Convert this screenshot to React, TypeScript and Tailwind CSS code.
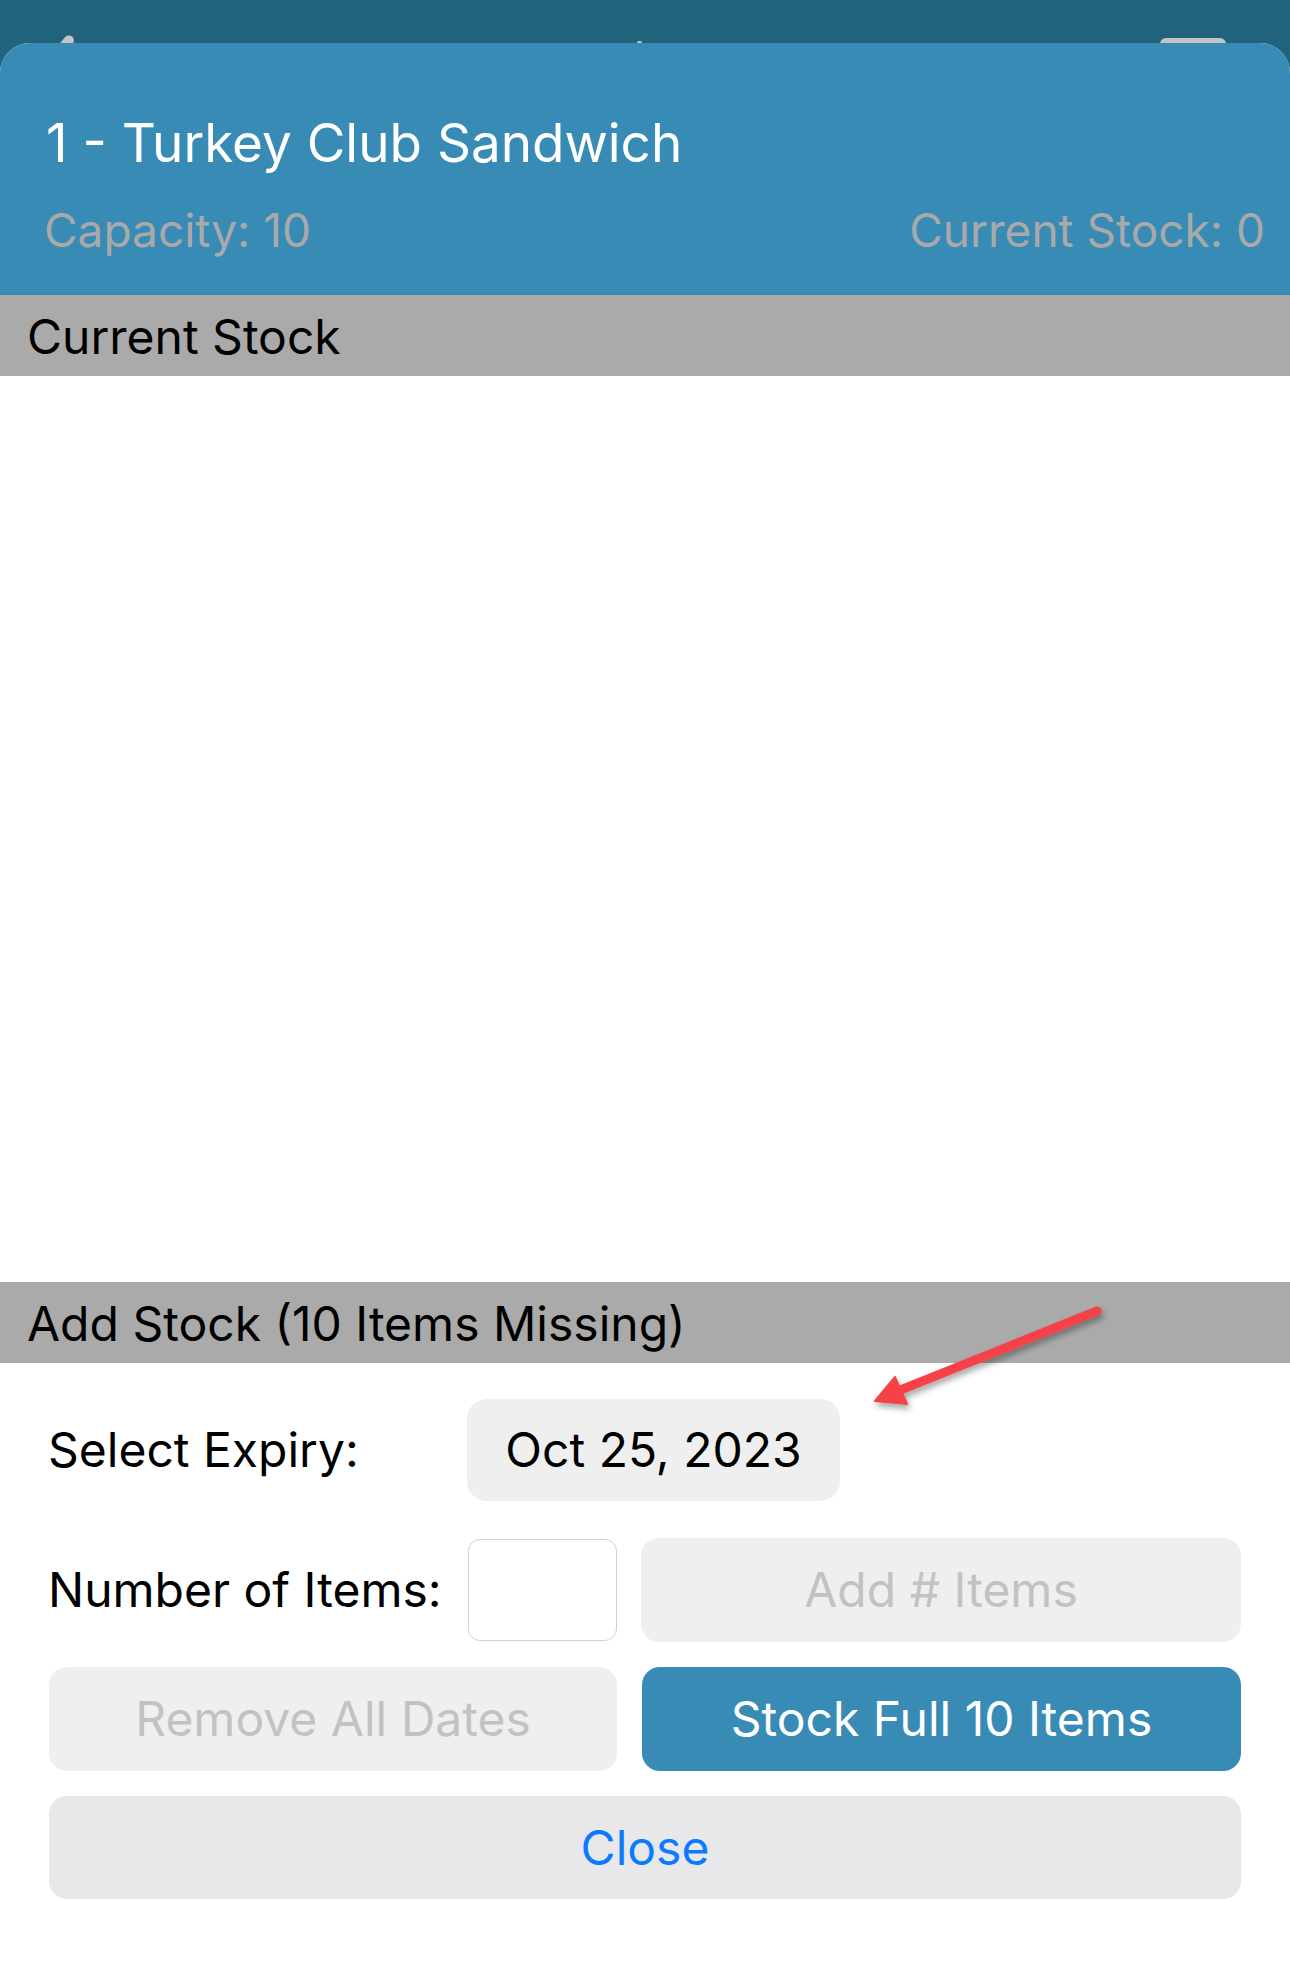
const font = { fontFamily: "Inter, 'Noto Sans', sans-serif" };

function PeekBar() {
	// bits of the screen underneath the sheet
	return (
		<div className="relative h-[43px] bg-[#21637d] overflow-hidden">
			<div className="absolute left-[60px] top-[34px] w-[10px] h-[22px] rounded-full bg-[#c4c4c4] rotate-[40deg]" />
			<div className="absolute left-[637px] top-[41px] w-[5px] h-[4px] rounded-sm bg-[#c4c4c4]" />
			<div className="absolute left-[1160px] top-[38px] w-[66px] h-[12px] rounded-[6px] bg-[#c4c4c4]" />
		</div>
	);
}

function SectionBar({ title }: { title: string }) {
	return (
		<div className="h-[81px] bg-[#aaaaaa] flex items-center pl-[27px] pt-[2px]">
			<p className="text-[48px] text-black leading-none">{title}</p>
		</div>
	);
}

function RedArrow() {
	return (
		<svg
			className="absolute left-[860px] top-[1300px] pointer-events-none"
			width="250"
			height="120"
			viewBox="860 1300 250 120"
		>
			<defs>
				<filter id="sh" x="-20%" y="-20%" width="140%" height="160%">
					<feDropShadow dx="2" dy="4" stdDeviation="3" floodColor="#000" floodOpacity="0.35" />
				</filter>
			</defs>
			<g filter="url(#sh)" fill="#f5434a" stroke="#f5434a">
				<line x1="1097" y1="1311" x2="893" y2="1393" strokeWidth="9" strokeLinecap="round" />
				<polygon points="875,1401 895,1377 907,1404" strokeWidth="2" strokeLinejoin="round" />
			</g>
		</svg>
	);
}

export default function App() {
	return (
		<div className="relative w-[1290px] h-[1988px] bg-[#21637d] overflow-hidden" style={font}>
			<PeekBar />
			<div className="bg-white rounded-t-[30px] overflow-hidden h-[1945px]">
				<div className="h-[252px] bg-[#388bb5] pl-[43px] pr-[25px] flex flex-col">
					<p className="text-[53px] text-white leading-none mt-[74px] ml-[3px]">1 - Turkey Club Sandwich</p>
					<div className="flex justify-between items-baseline mt-[37px] text-[46px] text-[#a9a9a9] leading-none">
						<span className="ml-[1px]">Capacity: 10</span>
						<span>Current Stock: 0</span>
					</div>
				</div>
				<SectionBar title="Current Stock" />
				<div className="h-[906px]" />
				<SectionBar title="Add Stock (10 Items Missing)" />

				<div className="px-[49px] pt-[36px] flex flex-col">
					<div className="flex items-center">
						<p className="w-[418px] -ml-[1px] text-[48px] text-black leading-none">Select Expiry:</p>
						<div className="w-[373px] h-[102px] ml-[1px] rounded-[20px] bg-[#efefef] flex items-center justify-center text-[48px] text-black">
							Oct 25, 2023
						</div>
					</div>

					<div className="flex items-center mt-[37px]">
						<p className="w-[420px] -ml-[1px] text-[48px] text-black leading-none">Number of Items:</p>
						<div className="w-[149px] h-[102px] rounded-[12px] border border-[#d0d0d0] bg-white" />
						<div className="flex-1 ml-[24px] h-[104px] rounded-[18px] bg-[#efefef] flex items-center justify-center text-[48px] text-[#c2c2c2]">
							Add # Items
						</div>
					</div>

					<div className="flex mt-[25px] gap-[25px]">
						<div className="w-[568px] h-[104px] rounded-[18px] bg-[#efefef] flex items-center justify-center text-[48px] text-[#c2c2c2]">
							Remove All Dates
						</div>
						<div className="flex-1 h-[104px] rounded-[18px] bg-[#388bb5] flex items-center justify-center text-[48px] text-white">
							Stock Full 10 Items
						</div>
					</div>

					<div className="mt-[25px] h-[103px] rounded-[18px] bg-[#e8e8ea] flex items-center justify-center text-[48px] text-[#0a7aff]">
						Close
					</div>
				</div>
			</div>
			<RedArrow />
		</div>
	);
}
